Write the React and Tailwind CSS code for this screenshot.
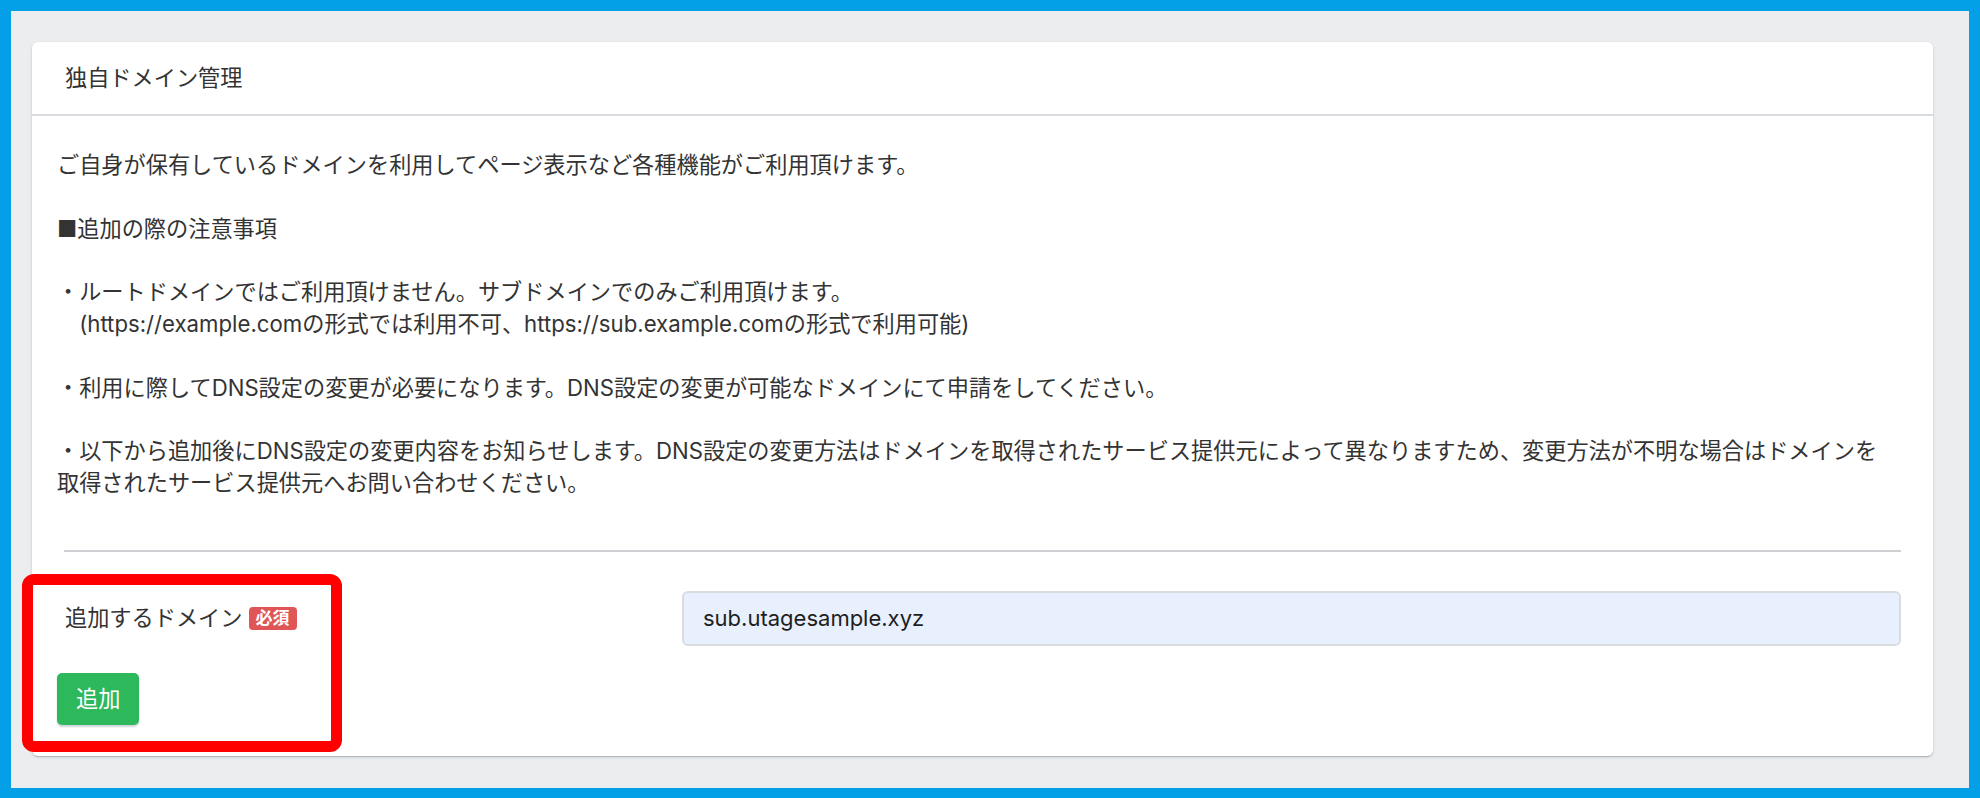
import React from "react";

const font = { fontFamily: '"Inter", "Noto Sans CJK JP", sans-serif' };

const App = () => {
  return (
    <main className="min-h-screen w-full bg-[#03a0e8] p-[11px]" style={font}>
      <div className="bg-[#ebedef] pl-[21px] pr-[36px] pt-[31px] pb-[32px]">
        {/* Card */}
        <div className="relative bg-white rounded-[6px] shadow-[0_1px_1px_rgba(60,75,100,0.14),0_2px_1px_-1px_rgba(60,75,100,0.12),0_1px_3px_rgba(60,75,100,0.2)]">
          <div className="h-[72px] flex items-center px-[33px] border-b-2 border-[#d8dbe0] box-content text-[22.2px] text-[#333]">
            独自ドメイン管理
          </div>

          <div className="pl-[25px] pr-[32px] pt-[33px] pb-[31px] text-[22.2px] leading-[31.8px] text-[#333]">
            <p>ご自身が保有しているドメインを利用してページ表示など各種機能がご利用頂けます。</p>
            <br />
            <p>■追加の際の注意事項</p>
            <br />
            <p>
              ・ルートドメインではご利用頂けません。サブドメインでのみご利用頂けます。
              <br />
              {"\u3000(https://example.comの形式では利用不可、https://sub.example.comの形式で利用可能)"}
            </p>
            <br />
            <p>・利用に際してDNS設定の変更が必要になります。DNS設定の変更が可能なドメインにて申請をしてください。</p>
            <br />
            <p className="mr-[-20px]">
              ・以下から追加後にDNS設定の変更内容をお知らせします。DNS設定の変更方法はドメインを取得されたサービス提供元によって異なりますため、変更方法が不明な場合はドメインを
              <br />
              取得されたサービス提供元へお問い合わせください。
            </p>

            <hr className="mt-[51px] ml-[7px] border-t-2 border-[#cfd0d4]" />

            {/* Form row */}
            <div className="flex mt-[39px]">
              <div className="w-[625px] shrink-0">
                <div className="h-[55px] flex items-center pl-[8px]">
                  <span>追加するドメイン</span>
                  <span className="ml-[6px] inline-flex items-center justify-center w-[48px] h-[23px] rounded-[4px] bg-[#e05555] text-white text-[17px] font-bold leading-none">
                    必須
                  </span>
                </div>
                <button
                  type="button"
                  className="mt-[27px] h-[52px] px-[19px] rounded-[5px] bg-[#2eb85c] text-white text-[22.2px] shadow-[0_2px_2px_rgba(60,75,100,0.25)]"
                >
                  追加
                </button>
              </div>
              <div className="flex-1">
                <input
                  type="text"
                  defaultValue="sub.utagesample.xyz"
                  className="w-full h-[55px] px-[19px] bg-[#e8f0fe] border-2 border-[#d8dbe0] rounded-[6px] text-[22px] text-[#1e1e1e] outline-none"
                  style={font}
                />
              </div>
            </div>
          </div>

          {/* Red highlight annotation */}
          <div className="absolute left-[-10px] top-[532px] w-[320px] h-[178px] border-[11px] border-[#ff0000] rounded-[12px] pointer-events-none" />
        </div>
      </div>
    </main>
  );
};

export default App;
